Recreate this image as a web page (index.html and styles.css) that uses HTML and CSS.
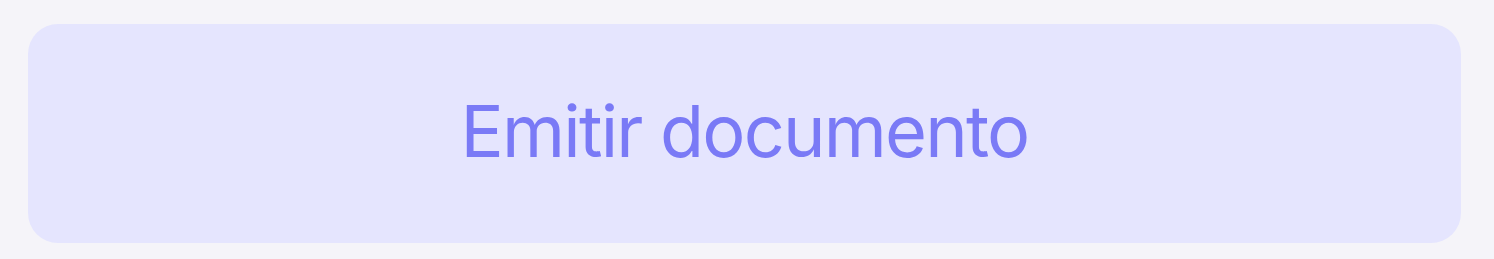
FILE: index.html
```html
<!DOCTYPE html>
<html lang="pt">
<head>
<meta charset="utf-8">
<link rel="stylesheet" href="styles.css">
<title>Emitir documento</title>
</head>
<body>
<main class="page">
  <button class="btn-primary-soft" type="button">Emitir documento</button>
</main>
</body>
</html>
```
FILE: styles.css
```css
html, body {
  margin: 0;
  padding: 0;
  background: #f5f4f9;
}
.page {
  padding: 24px 33px 16px 28px;
  height: 259px;
  box-sizing: border-box;
  display: flex;
}
.btn-primary-soft {
  flex: 1;
  height: 219px;
  border: none;
  border-radius: 30px;
  background: #e5e5fe;
  color: #7a7af6;
  font-family: Inter, "Noto Sans", sans-serif;
  font-size: 72px;
  font-weight: 400;
  letter-spacing: -1.8px;
  display: flex;
  align-items: center;
  justify-content: center;
  padding: 0 0 6px 0;
  cursor: pointer;
}
```
